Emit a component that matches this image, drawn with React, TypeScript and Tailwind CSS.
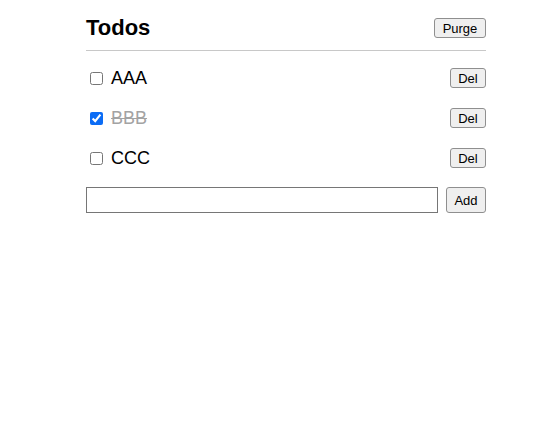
import { useState } from "react";

type Todo = { id: number; text: string; done: boolean };

const btn =
  "h-5 rounded-[3px] border border-[#8f8f8f] bg-[#efefef] text-center text-[13px] leading-none text-black";

export default function App() {
  const [todos, setTodos] = useState<Todo[]>([
    { id: 1, text: "AAA", done: false },
    { id: 2, text: "BBB", done: true },
    { id: 3, text: "CCC", done: false },
  ]);
  const [draft, setDraft] = useState("");

  const add = () => {
    if (!draft.trim()) return;
    setTodos([...todos, { id: Date.now(), text: draft, done: false }]);
    setDraft("");
  };

  return (
    <div className="min-h-[436px] bg-white font-['Liberation_Sans',Arial,sans-serif] text-black">
      <div className="ml-[86px] w-[400px] pt-[13px]">
        <div className="flex h-[30px] items-center justify-between">
          <h1 className="text-[22px] font-semibold leading-none">Todos</h1>
          <button
            type="button"
            className={`${btn} w-[52px]`}
            onClick={() => setTodos(todos.filter((t) => !t.done))}
          >
            Purge
          </button>
        </div>
        <hr className="mt-[7px] border-t border-[#c8c8c8]" />
        <ul className="mt-[7px]">
          {todos.map((t) => (
            <li key={t.id} className="flex h-10 items-center justify-between">
              <label className="flex items-center">
                <input
                  type="checkbox"
                  checked={t.done}
                  onChange={() => setTodos(todos.map((x) => (x.id === t.id ? { ...x, done: !x.done } : x)))}
                  className="ml-[4px] size-[13px] accent-[#0b6cf5]"
                />
                <span className={t.done ? "ml-[8px] text-lg text-[#a3a3a3] line-through" : "ml-[8px] text-lg"}>
                  {t.text}
                </span>
              </label>
              <button
                type="button"
                className={`${btn} w-9`}
                onClick={() => setTodos(todos.filter((x) => x.id !== t.id))}
              >
                Del
              </button>
            </li>
          ))}
        </ul>
        <div className="mt-[9px] flex items-center gap-2">
          <input
            value={draft}
            onChange={(e) => setDraft(e.target.value)}
            className="h-[26px] flex-1 border border-[#767676] px-1 text-[13px]"
          />
          <button type="button" className={`${btn} h-[26px] w-10`} onClick={add}>
            Add
          </button>
        </div>
      </div>
    </div>
  );
}
